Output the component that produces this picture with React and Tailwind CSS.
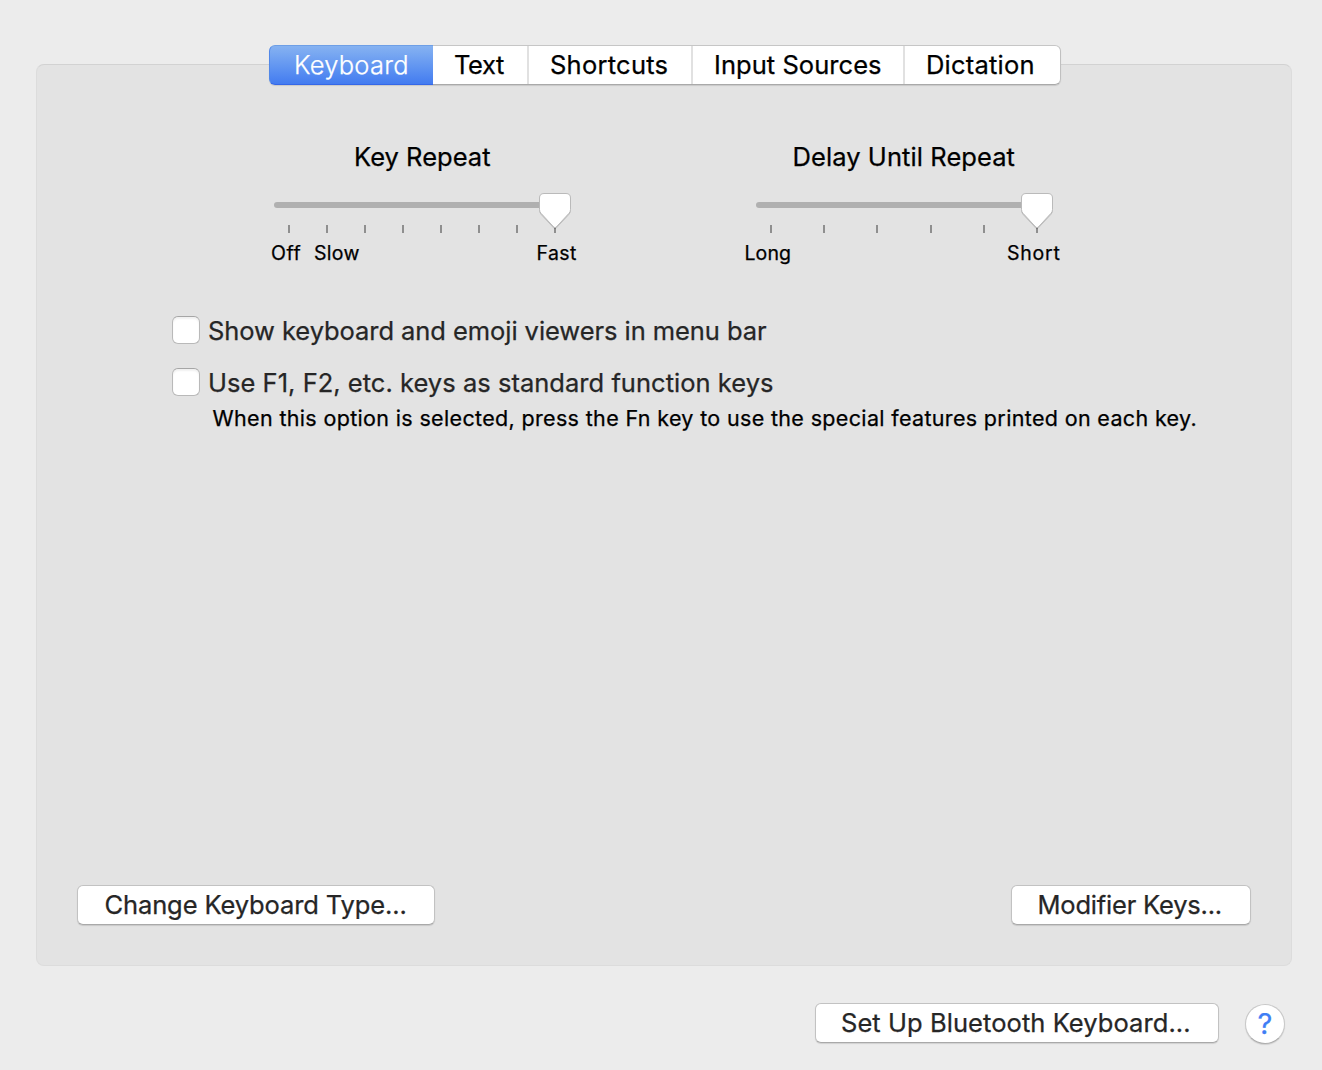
const tabs = [
  { label: 'Keyboard', box: 'w-[164px] pl-[24px] tracking-[0.24px] rounded-l-[6px] text-white font-light border border-r-0 border-t-[#6e9fe6] border-l-[#5288e8] border-b-[#3567e8] bg-linear-to-b from-[#86b2f1] to-[#437bf0]' },
  { label: 'Text', box: 'w-[96px] pl-[21px] tracking-[-0.39px] bg-white border-y border-t-[#c6c6c6] border-b-[#a9a9a9]', divider: true },
  { label: 'Shortcuts', box: 'w-[164px] pl-[21px] tracking-[0.25px] bg-white border-y border-t-[#c6c6c6] border-b-[#a9a9a9]', divider: true },
  { label: 'Input Sources', box: 'w-[212px] pl-[21px] tracking-[0.05px] bg-white border-y border-t-[#c6c6c6] border-b-[#a9a9a9]', divider: true },
  { label: 'Dictation', box: 'w-[156px] pl-[21px] tracking-[0.22px] bg-white border border-l-0 rounded-r-[6px] border-t-[#c6c6c6] border-r-[#c0c0c0] border-b-[#a9a9a9]' },
];

function Tabs() {
  return (
    <div className="relative z-10 -mb-[21px] ml-[269px] flex h-10 w-[792px] rounded-[6px] shadow-[0_1px_1px_rgba(0,0,0,0.12)]">
      {tabs.map((t) => (
        <button key={t.label} className={`flex h-10 items-center whitespace-nowrap ${t.box}`}>
          <span>{t.label}</span>
          {t.divider && <span className="ml-auto h-full w-[2px] bg-[#e1e1e1]" />}
        </button>
      ))}
    </div>
  );
}

function Slider({ gaps }) {
  return (
    <div className="relative h-10 w-[297px] pt-[7px]">
      <div className="h-[6px] w-[282px] rounded-full bg-[#b0b0b0]" />
      <div className="mt-[17px] flex pl-[14px]">
        {gaps.map((g, i) => (
          <span key={i} style={{ marginRight: g }} className="h-2 w-[2px] shrink-0 bg-[#8f8f8f]" />
        ))}
      </div>
      <svg className="absolute left-[263px] top-[-4px] overflow-visible drop-shadow-[0_1px_0.5px_rgba(0,0,0,0.15)]" width="36" height="40" viewBox="0 0 36 40" fill="none">
        <path
          d="M7 2.5H29Q33.5 2.5 33.5 7V18.5Q33.5 20.6 32 22.3L19.2 36.1Q18 37.3 16.8 36.1L4 22.3Q2.5 20.6 2.5 18.5V7Q2.5 2.5 7 2.5Z"
          fill="#fff"
          stroke="#bababa"
        />
      </svg>
    </div>
  );
}

function Checkbox({ children, className }) {
  return (
    <label className={`flex h-7 items-center whitespace-nowrap text-[#262626] ${className}`}>
      <span className="mr-2 size-7 shrink-0 rounded-[6px] border border-[#b9b9b9] border-t-[#a6a6a6] bg-white shadow-[inset_0_2px_2px_rgba(0,0,0,0.06)]" />
      <span className="mt-[2px]">{children}</span>
    </label>
  );
}

function PushButton({ children, className }) {
  return (
    <button
      className={`flex h-10 items-center whitespace-nowrap rounded-[6px] border border-[#c2c2c2] border-b-[#a9a9a9] bg-white text-[#262626] shadow-[0_1px_1px_rgba(0,0,0,0.12)] ${className}`}
    >
      {children}
    </button>
  );
}

export default function App() {
  return (
    <div className="h-[1070px] w-[1322px] overflow-hidden bg-[#ececec] pt-[45px] font-['Inter',sans-serif] text-[25.5px] leading-[30px] text-black [-webkit-text-stroke:0.25px]">
      <Tabs />
      <main className="ml-[36px] flex h-[902px] w-[1256px] flex-col rounded-[8px] border border-[#dcdcdc] border-t-[#d2d2d2] bg-[#e3e3e3]">
        <div className="flex pt-[77px]">
          <section className="ml-[233px] w-[482px]">
            <h2 className="ml-[84px] whitespace-nowrap tracking-[0.02px]">Key Repeat</h2>
            <div className="ml-1 mt-[23px]">
              <Slider gaps={[36, 36, 36, 36, 36, 36, 36, 0]} />
            </div>
            <div className="mt-[6px] flex whitespace-nowrap text-[19.5px] leading-[24px]">
              <span className="ml-[1px] w-[43px] tracking-[0.57px]">Off</span>
              <span className="w-[222.5px] tracking-[0.31px]">Slow</span>
              <span className="tracking-[0.41px]">Fast</span>
            </div>
          </section>
          <section className="w-[340px]">
            <h2 className="ml-[40.5px] whitespace-nowrap tracking-[0.08px]">Delay Until Repeat</h2>
            <div className="ml-1 mt-[23px]">
              <Slider gaps={[51, 51, 52, 51, 51, 0]} />
            </div>
            <div className="mt-[6px] -ml-[7.5px] flex whitespace-nowrap text-[19.5px] leading-[24px]">
              <span className="w-[262.5px] tracking-[0.09px]">Long</span>
              <span className="tracking-[0.75px]">Short</span>
            </div>
          </section>
        </div>
        <div className="ml-[135px] mt-[51px]">
          <Checkbox className="tracking-[-0.065px]">Show keyboard and emoji viewers in menu bar</Checkbox>
          <Checkbox className="mt-6 tracking-[0.026px]">Use F1, F2, etc. keys as standard function keys</Checkbox>
          <p className="ml-[40.5px] mt-[8px] whitespace-nowrap text-[21.5px] leading-[28px] tracking-[0.341px]">
            When this option is selected, press the Fn key to use the special features printed on each key.
          </p>
        </div>
        <div className="mb-10 mt-auto flex justify-between pl-10 pr-10">
          <PushButton className="w-[358px] pl-[26.5px] tracking-[-0.12px]">Change Keyboard Type...</PushButton>
          <PushButton className="w-[240px] pl-[25.5px] tracking-[-0.2px]">Modifier Keys...</PushButton>
        </div>
      </main>
      <footer className="mt-[37px] flex">
        <PushButton className="ml-[815px] w-[404px] pl-[25px] tracking-[0.065px]">Set Up Bluetooth Keyboard...</PushButton>
        <button className="ml-[26px] mt-px flex size-10 items-center justify-center rounded-full border border-[#c8c8c8] border-b-[#adadad] bg-white shadow-[0_1px_1px_rgba(0,0,0,0.12)]">
          <span className="text-[29px] text-[#3f7ef5]">?</span>
        </button>
      </footer>
    </div>
  );
}
